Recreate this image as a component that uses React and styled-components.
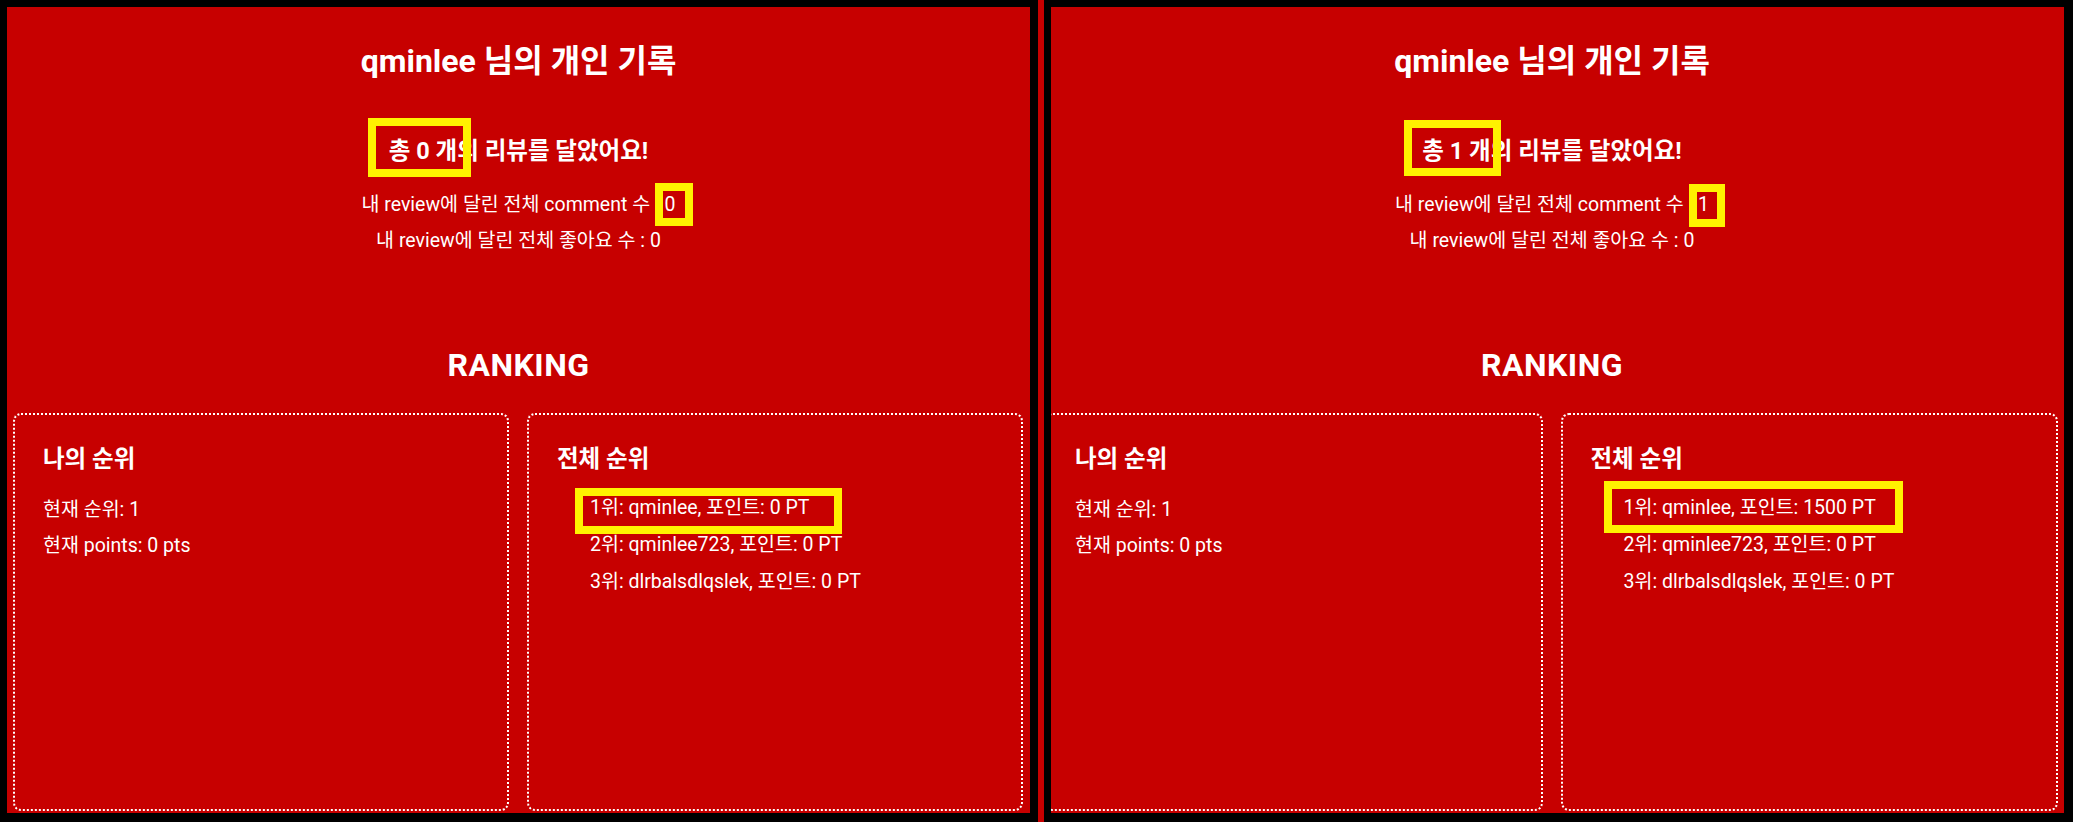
import React from 'react';
import styled, { createGlobalStyle } from 'styled-components';

const GlobalStyle = createGlobalStyle`
  * { box-sizing: border-box; }
  body {
    margin: 0;
    background: #000;
    font-family: Roboto, "Noto Sans CJK KR", sans-serif;
  }
`;

const Frame = styled.div`
  display: flex;
  width: 2073px;
  height: 822px;
  background: #000;
  overflow: hidden;
`;

const Shot = styled.div`
  position: relative;
  flex: none;
  display: flex;
  width: ${p => p.$w}px;
  height: 806px;
  margin-top: 7px;
  margin-left: ${p => p.$ml}px;
  background: #c70000;
  overflow: hidden;
`;

const Seam = styled.div`
  flex: none;
  width: 6px;
  margin-left: 8px;
  background: #c70000;
`;

const Page = styled.div`
  flex: none;
  width: ${p => p.$w}px;
  margin-left: ${p => p.$shift}px;
  display: flex;
  flex-direction: column;
  align-items: center;
  color: #fff;
`;

const Title = styled.h2`
  margin: 34px 0 0;
  font-size: 32px;
  font-weight: 700;
  line-height: 40px;
`;

const Total = styled.h3`
  margin: 55px 0 21px;
  font-size: 23.5px;
  font-weight: 700;
  line-height: 30px;
`;

const Stat = styled.p`
  margin: 0;
  font-size: 19.5px;
  line-height: 36px;
`;

const RankTitle = styled.h2`
  margin: 86px 0 28px;
  font-size: 32px;
  font-weight: 700;
  line-height: 40px;
  letter-spacing: 0.5px;
`;

const Boards = styled.div`
  align-self: stretch;
  display: flex;
  gap: 18px;
  height: 398px;
  padding: 0 7px 0 6px;
`;

const Board = styled.section`
  flex: 1;
  border: 2px dotted #fff;
  border-radius: 8px;
  padding: 29px 28px;
`;

const BoardTitle = styled.h3`
  margin: 0 0 ${p => p.$gap}px;
  font-size: 23.5px;
  font-weight: 700;
  line-height: 30px;
`;

const RankList = styled.ul`
  list-style: none;
  margin: 0;
  padding-left: 33px;
`;

const RankItem = styled.li`
  font-size: 19.5px;
  line-height: 37px;
`;

const Mark = styled.span`
  position: absolute;
  left: ${p => p.$x}px;
  top: ${p => p.$y}px;
  width: ${p => p.$w}px;
  height: ${p => p.$h}px;
  border: 8px solid #fff200;
  pointer-events: none;
`;

const others = [
  { name: 'qminlee723', points: 0 },
  { name: 'dlrbalsdlqslek', points: 0 },
];

function Record({ reviews, comments, topPoints, width, shift }) {
  const ranking = [{ name: 'qminlee', points: topPoints }, ...others];
  return (
    <Page $w={width} $shift={shift}>
      <Title>qminlee 님의 개인 기록</Title>
      <Total>총 {reviews} 개의 리뷰를 달았어요!</Total>
      <Stat>내 review에 달린 전체 comment 수 : {comments}</Stat>
      <Stat>내 review에 달린 전체 좋아요 수 : 0</Stat>
      <RankTitle>RANKING</RankTitle>
      <Boards>
        <Board>
          <BoardTitle $gap={18}>나의 순위</BoardTitle>
          <Stat>현재 순위: 1</Stat>
          <Stat>현재 points: 0 pts</Stat>
        </Board>
        <Board>
          <BoardTitle $gap={15}>전체 순위</BoardTitle>
          <RankList>
            {ranking.map((r, i) => (
              <RankItem key={r.name}>
                {i + 1}위: {r.name}, 포인트: {r.points} PT
              </RankItem>
            ))}
          </RankList>
        </Board>
      </Boards>
    </Page>
  );
}

export default function App() {
  return (
    <>
      <GlobalStyle />
      <Frame>
        <Shot $w={1023} $ml={7}>
          <Record reviews={0} comments={0} topPoints={0} width={1023} shift={0} />
          <Mark $x={361} $y={111} $w={103} $h={59} />
          <Mark $x={648} $y={176} $w={38} $h={43} />
          <Mark $x={568} $y={481} $w={267} $h={46} />
        </Shot>
        <Seam />
        <Shot $w={1013} $ml={7}>
          <Record reviews={1} comments={1} topPoints={1500} width={1026} shift={-12} />
          <Mark $x={353} $y={113} $w={97} $h={56} />
          <Mark $x={638} $y={177} $w={36} $h={43} />
          <Mark $x={553} $y={474} $w={299} $h={52} />
        </Shot>
      </Frame>
    </>
  );
}
